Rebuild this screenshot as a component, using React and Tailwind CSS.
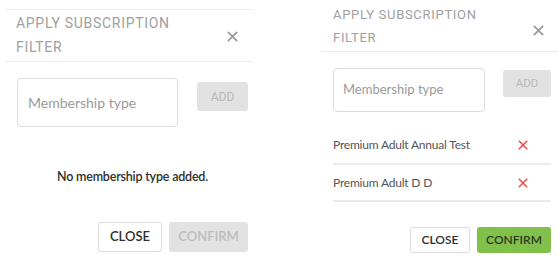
import React from "react";

function XIcon({ size = 11, color = "#9a9a9a", sw = 1.6 }) {
  return (
    <svg width={size} height={size} viewBox="0 0 10 10" fill="none">
      <path d="M0.8 0.8 L9.2 9.2 M9.2 0.8 L0.8 9.2" stroke={color} strokeWidth={sw} strokeLinecap="butt" />
    </svg>
  );
}

const body = { fontFamily: "Lato, 'Open Sans', sans-serif" };
const head = { fontFamily: "Roboto, 'Liberation Sans', sans-serif" };

export default function App() {
  return (
    <div className="w-[558px] h-[263px] bg-white overflow-hidden flex items-start">
      {/* Left panel */}
      <div className="ml-[5px] mt-[9px] w-[248px] shrink-0">
        <div className="border-t border-b border-[#ececec] flex items-center justify-between pl-[11px] pr-[15px] pt-[1px] pb-[2px]">
          <div style={head} className="text-[14px] leading-[24px] tracking-[0.7px] text-[#a0a0a0] font-normal">
            APPLY SUBSCRIPTION
            <br />
            FILTER
          </div>
          <div className="mt-[3px]">
            <XIcon size={11} />
          </div>
        </div>
        <div className="pl-[12px] pr-[5px]" style={body}>
          <div className="flex items-start mt-[16px]">
            <div className="w-[161px] h-[49px] border border-[#dcdcdc] rounded-[4px] flex items-center pl-[10px] text-[14px] text-[#9a9a9a]">
              Membership type
            </div>
            <div className="ml-[19px] mt-[4px] w-[51px] h-[29px] bg-[#e2e2e2] rounded-[3px] flex items-center justify-center text-[12px] text-[#b8b8b8]" style={head}>
              ADD
            </div>
          </div>
          <div className="mt-[40px] h-[20px] flex items-center justify-center text-[12.5px] font-semibold text-[#2e2e2e] tracking-[-0.2px]">
            No membership type added.
          </div>
          <div className="mt-[35px] flex justify-end gap-[7px]">
            <div className="w-[64px] h-[30px] border border-[#dcdcdc] rounded-[3px] flex items-center justify-center text-[13px] font-semibold text-[#2e2e2e]">
              CLOSE
            </div>
            <div className="w-[79px] h-[30px] bg-[#e2e2e2] rounded-[3px] flex items-center justify-center text-[13px] font-semibold text-[#bdbdbd]">
              CONFIRM
            </div>
          </div>
        </div>
      </div>

      {/* Right panel */}
      <div className="ml-[68px] w-[240px] shrink-0">
        <div className="border-b border-[#ececec] flex items-center justify-between pl-[12px] pr-[17px] pt-[3px] pb-[2px]">
          <div style={head} className="text-[13px] leading-[23px] tracking-[0.7px] text-[#a0a0a0] font-normal">
            APPLY SUBSCRIPTION
            <br />
            FILTER
          </div>
          <div className="mt-[8px]">
            <XIcon size={11} />
          </div>
        </div>
        <div className="pl-[12px] pr-[10px]" style={body}>
          <div className="flex items-start mt-[16px]">
            <div className="w-[152px] h-[44px] border border-[#dcdcdc] rounded-[4px] flex items-center pl-[9px] text-[13px] text-[#9a9a9a]">
              Membership type
            </div>
            <div className="ml-[18px] mt-[2px] w-[48px] h-[27px] bg-[#e2e2e2] rounded-[3px] flex items-center justify-center text-[11.5px] text-[#b8b8b8]" style={head}>
              ADD
            </div>
          </div>
          <div className="mt-[16px]">
            <div className="h-[37px] border-b-2 border-[#ebebeb] flex items-center justify-between pr-[23px] pb-[2px]">
              <span className="text-[12px] text-[#555] tracking-[-0.2px]">Premium Adult Annual Test</span>
              <XIcon size={10} color="#ef4b42" sw={1.5} />
            </div>
            <div className="h-[37px] border-b-2 border-[#ebebeb] flex items-center justify-between pr-[23px]">
              <span className="text-[12px] text-[#555] tracking-[-0.2px]">Premium Adult D D</span>
              <XIcon size={10} color="#ef4b42" sw={1.5} />
            </div>
          </div>
          <div className="mt-[25px] flex justify-end gap-[7px]">
            <div className="w-[60px] h-[26px] border border-[#dcdcdc] rounded-[3px] flex items-center justify-center text-[12px] font-semibold text-[#2e2e2e]">
              CLOSE
            </div>
            <div className="w-[74px] h-[26px] bg-[#80c04b] rounded-[3px] flex items-center justify-center text-[12px] font-semibold text-[#2a3a1e]">
              CONFIRM
            </div>
          </div>
        </div>
      </div>
    </div>
  );
}
